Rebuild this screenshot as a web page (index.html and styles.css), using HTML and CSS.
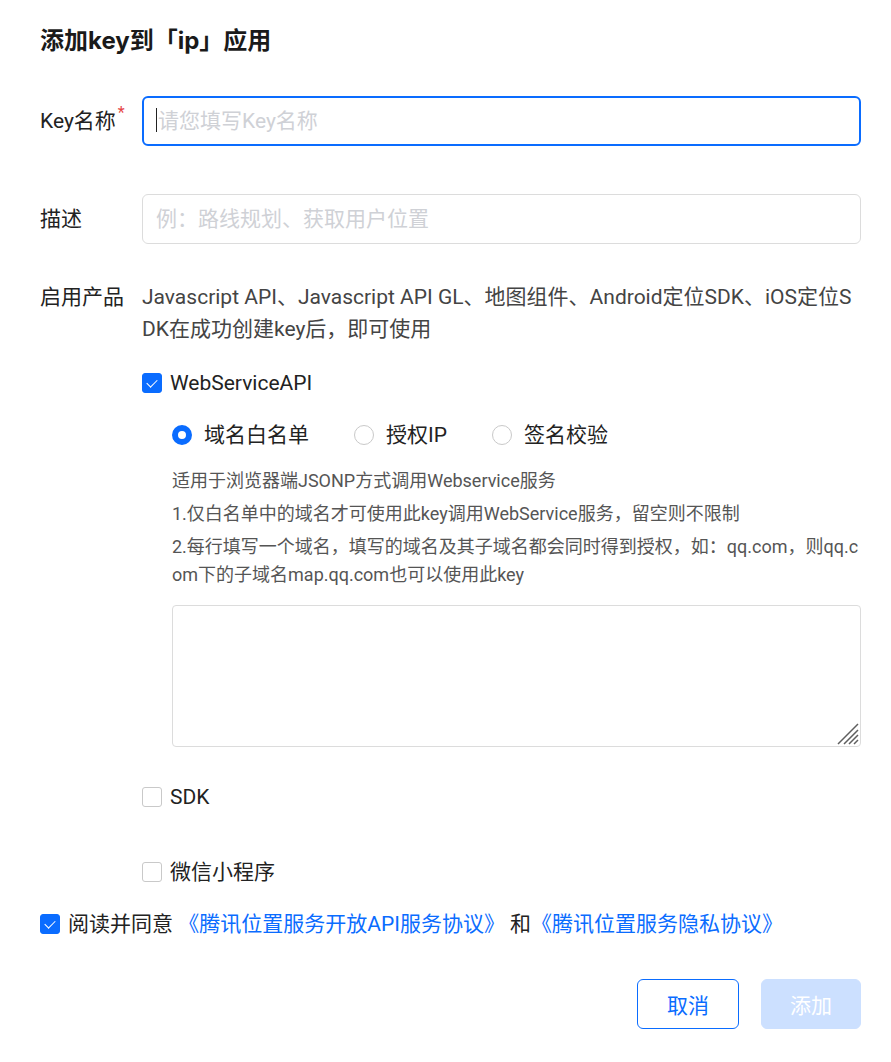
FILE: index.html
```html
<!DOCTYPE html>
<html lang="zh-CN">
<head>
  <meta charset="UTF-8">
  <meta name="viewport" content="width=device-width, initial-scale=1.0">
  <title>添加key</title>
  <link rel="stylesheet" href="styles.css">
</head>
<body>
  <div class="dialog">
    <h2 class="dialog-title">添加key到「ip」应用</h2>

    <div class="form-row">
      <label class="form-label">Key名称<span class="required">*</span></label>
      <div class="form-control input-wrap has-caret">
        <input class="input is-focus" type="text" placeholder="请您填写Key名称">
      </div>
    </div>

    <div class="form-row">
      <label class="form-label">描述</label>
      <div class="form-control">
        <input class="input" type="text" placeholder="例：路线规划、获取用户位置">
      </div>
    </div>

    <div class="form-row form-row-top">
      <label class="form-label">启用产品</label>
      <div class="form-control">
        <p class="product-note">Javascript API、Javascript API GL、地图组件、Android定位SDK、iOS定位SDK在成功创建key后，即可使用</p>

        <label class="checkbox is-checked product-item">
          <span class="checkbox-box"></span>
          <span class="checkbox-text">WebServiceAPI</span>
        </label>

        <div class="product-sub">
          <div class="radio-group">
            <label class="radio is-checked"><span class="radio-dot"></span>域名白名单</label>
            <label class="radio"><span class="radio-dot"></span>授权IP</label>
            <label class="radio"><span class="radio-dot"></span>签名校验</label>
          </div>
          <div class="tips">
            <p>适用于浏览器端JSONP方式调用Webservice服务</p>
            <p>1.仅白名单中的域名才可使用此key调用WebService服务，留空则不限制</p>
            <p>2.每行填写一个域名，填写的域名及其子域名都会同时得到授权，如：qq.com，则qq.com下的子域名map.qq.com也可以使用此key</p>
          </div>
          <div class="textarea-wrap">
            <textarea class="textarea"></textarea>
            <svg class="resize-handle" width="22" height="22" viewBox="0 0 22 22">
              <path d="M1 21L21 1M7 21L21 7M12 21L21 12M17 21L21 17" stroke="#5f5f5f" stroke-width="1.5" fill="none"/>
            </svg>
          </div>
        </div>

        <label class="checkbox product-item product-sdk">
          <span class="checkbox-box"></span>
          <span class="checkbox-text">SDK</span>
        </label>

        <label class="checkbox product-item product-mini">
          <span class="checkbox-box"></span>
          <span class="checkbox-text">微信小程序</span>
        </label>
      </div>
    </div>

    <label class="checkbox is-checked agreement">
      <span class="checkbox-box"></span>
      <span class="checkbox-text">阅读并同意 <a href="#">《腾讯位置服务开放API服务协议》</a> 和<a href="#">《腾讯位置服务隐私协议》</a></span>
    </label>

    <div class="dialog-footer">
      <button class="btn btn-outline">取消</button>
      <button class="btn btn-primary" disabled>添加</button>
    </div>
  </div>
</body>
</html>
```

FILE: styles.css
```css
body {
  margin: 0;
  background: #fff;
  color: #222;
  font-family: Roboto, "Noto Sans CJK SC", sans-serif;
  font-size: 21px;
}

.dialog {
  padding: 25px 30px 0 40px;
}

.dialog-title {
  margin: 0 0 39px;
  font-family: Inter, "Noto Sans CJK SC", sans-serif;
  font-size: 24px;
  line-height: 32px;
  font-weight: 700;
  color: #1a1a1a;
}

.form-row {
  display: flex;
  align-items: center;
  margin-bottom: 48px;
}

.form-row-top {
  align-items: flex-start;
  margin-top: -11px;
  margin-bottom: 20px;
}

.form-label {
  flex: 0 0 102px;
  line-height: 32px;
  color: #222;
}

.required {
  color: #e54545;
  font-size: 16px;
  vertical-align: top;
  position: relative;
  top: -8px;
  margin-left: 2px;
}

.form-control {
  flex: 1;
  min-width: 0;
}

.input-wrap {
  position: relative;
}

.has-caret::before {
  content: "";
  position: absolute;
  left: 14px;
  top: 12px;
  width: 1px;
  height: 24px;
  background: #222;
}

.input {
  display: block;
  width: 100%;
  height: 50px;
  box-sizing: border-box;
  padding: 0 13px;
  border: 1px solid #dcdcdc;
  border-radius: 6px;
  font: inherit;
  font-size: 21px;
  color: #222;
  outline: none;
}

.input.is-focus {
  border: 2px solid #0a6cff;
  padding: 0 12px 0 14px;
}

.input::placeholder {
  color: #cfd1d6;
}

.product-note {
  margin: 0 0 22px;
  line-height: 32px;
  color: #444;
  word-break: break-all;
}

.checkbox {
  display: flex;
  align-items: center;
  line-height: 32px;
  cursor: pointer;
}

.checkbox-box {
  position: relative;
  flex: 0 0 auto;
  width: 20px;
  height: 20px;
  box-sizing: border-box;
  border: 1px solid #c9c9c9;
  border-radius: 3px;
  margin-right: 8px;
  background: #fff;
}

.checkbox.is-checked .checkbox-box {
  background: #0a6cff;
  border-color: #0a6cff;
}

.checkbox.is-checked .checkbox-box::after {
  content: "";
  position: absolute;
  left: 6px;
  top: 3px;
  width: 5px;
  height: 9px;
  border: solid #fff;
  border-width: 0 1.5px 1.5px 0;
  transform: rotate(45deg);
}

.checkbox-text a {
  color: #0a6cff;
  text-decoration: none;
}

.product-sub {
  padding-left: 30px;
  margin-top: 20px;
}

.radio-group {
  display: flex;
  gap: 45px;
  line-height: 32px;
}

.radio {
  display: flex;
  align-items: center;
}

.radio-dot {
  width: 20px;
  height: 20px;
  box-sizing: border-box;
  border: 1px solid #c9c9c9;
  border-radius: 50%;
  margin-right: 12px;
}

.radio.is-checked .radio-dot {
  border: 6px solid #0a6cff;
}

.tips {
  margin-top: 16px;
  font-size: 18px;
  line-height: 28px;
  color: #555;
  word-break: break-all;
}

.tips p {
  margin: 0 0 5px;
}

.textarea-wrap {
  position: relative;
  margin-top: 16px;
}

.textarea {
  display: block;
  width: 100%;
  height: 142px;
  box-sizing: border-box;
  border: 1px solid #dcdcdc;
  border-radius: 4px;
  resize: none;
  font: inherit;
  outline: none;
}

.resize-handle {
  position: absolute;
  right: 2px;
  bottom: 2px;
}

.product-sdk {
  margin-top: 34px;
}

.product-mini {
  margin-top: 43px;
}

.agreement {
  margin-bottom: 39px;
}

.dialog-footer {
  display: flex;
  justify-content: flex-end;
  gap: 22px;
  padding-bottom: 30px;
}

.btn {
  height: 50px;
  padding: 0 28px;
  border-radius: 6px;
  font: inherit;
  font-size: 21px;
  cursor: pointer;
}

.btn-outline {
  width: 102px;
  border: 1px solid #0a6cff;
  background: #fff;
  color: #0a6cff;
}

.btn-primary {
  width: 100px;
  border: 1px solid #cce0ff;
  background: #cce0ff;
  color: #fff;
  cursor: not-allowed;
}
```
